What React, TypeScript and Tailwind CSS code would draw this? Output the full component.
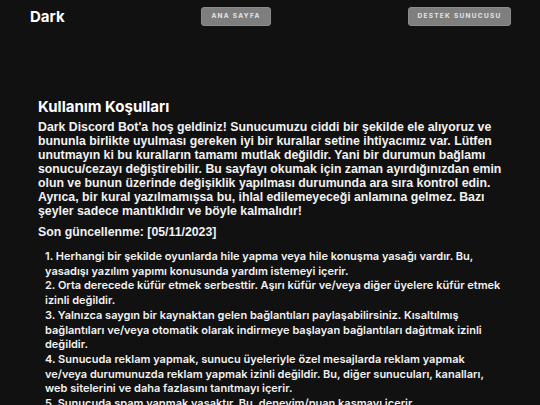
export default function App() {
  const rules = [
    "1. Herhangi bir şekilde oyunlarda hile yapma veya hile konuşma yasağı vardır. Bu, yasadışı yazılım yapımı konusunda yardım istemeyi içerir.",
    "2. Orta derecede küfür etmek serbesttir. Aşırı küfür ve/veya diğer üyelere küfür etmek izinli değildir.",
    "3. Yalnızca saygın bir kaynaktan gelen bağlantıları paylaşabilirsiniz. Kısaltılmış bağlantıları ve/veya otomatik olarak indirmeye başlayan bağlantıları dağıtmak izinli değildir.",
    "4. Sunucuda reklam yapmak, sunucu üyeleriyle özel mesajlarda reklam yapmak ve/veya durumunuzda reklam yapmak izinli değildir. Bu, diğer sunucuları, kanalları, web sitelerini ve daha fazlasını tanıtmayı içerir.",
    "5. Sunucuda spam yapmak yasaktır. Bu, deneyim/puan kasmayı içerir.",
  ]
  return (
    <div className="min-h-screen bg-[#111111] text-[#f2f2f2]">
      <header className="flex items-center justify-between pl-[30px] pr-[29px] pt-[7px]">
        <div className="font-['Inter',sans-serif] text-[15px] font-bold text-white leading-[19px]">Dark</div>
        <div className="flex gap-[137px]">
          <button className="h-[19px] w-[70px] rounded-[3px] border border-[#8c8c8c] bg-[#7e7e7e] font-['Inter',sans-serif] text-[6.5px] font-bold uppercase tracking-[0.2em] text-[#e6e6e6]">
            Ana Sayfa
          </button>
          <button className="h-[19px] w-[103px] rounded-[3px] border border-[#8c8c8c] bg-[#7e7e7e] font-['Inter',sans-serif] text-[6.5px] font-bold uppercase tracking-[0.2em] text-[#e6e6e6]">
            Destek Sunucusu
          </button>
        </div>
      </header>
      <main className="pl-[38px] pr-[34px] pt-[72px]">
        <h1 className="font-['Inter',sans-serif] text-[15px] font-bold leading-[18px] text-white">Kullanım Koşulları</h1>
        <p className="mt-[4px] font-['Liberation_Sans',Arial,sans-serif] text-[12.3px] font-bold leading-[14px]">
          Dark Discord Bot'a hoş geldiniz! Sunucumuzu ciddi bir şekilde ele alıyoruz ve bununla birlikte uyulması gereken iyi bir kurallar setine ihtiyacımız var. Lütfen unutmayın ki bu kuralların tamamı mutlak değildir. Yani bir durumun bağlamı sonucu/cezayı değiştirebilir. Bu sayfayı okumak için zaman ayırdığınızdan emin olun ve bunun üzerinde değişiklik yapılması durumunda ara sıra kontrol edin. Ayrıca, bir kural yazılmamışsa bu, ihlal edilemeyeceği anlamına gelmez. Bazı şeyler sadece mantıklıdır ve böyle kalmalıdır!
        </p>
        <p className="mt-[7px] font-['Liberation_Sans',Arial,sans-serif] text-[12.3px] font-bold leading-[14px]">
          Son güncellenme: [05/11/2023]
        </p>
        <ol className="mt-[10px] pl-[7px] pr-[4px] font-['Inter',sans-serif] text-[11px] font-semibold leading-[14.7px]">
          {rules.map((r) => (
            <li key={r}>{r}</li>
          ))}
        </ol>
      </main>
    </div>
  )
}
